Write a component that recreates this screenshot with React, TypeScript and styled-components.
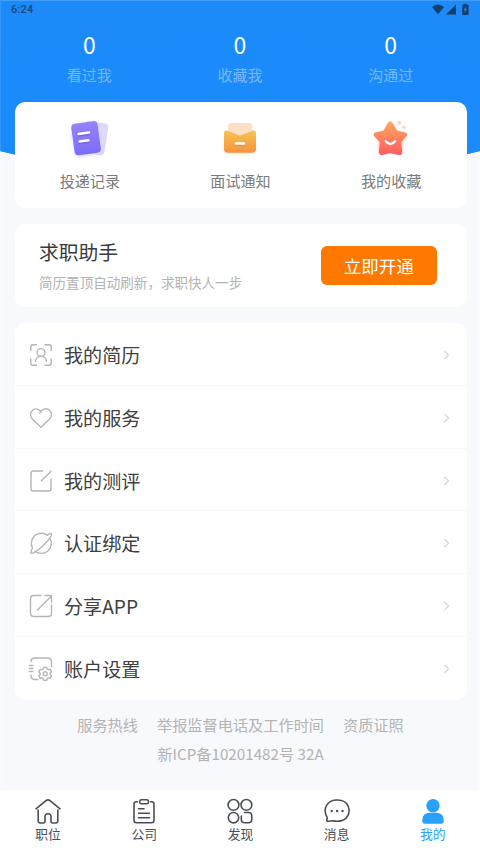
import React from "react";
import styled, { createGlobalStyle } from "styled-components";

const GlobalStyle = createGlobalStyle`
  * { box-sizing: border-box; }
  body { margin: 0; background: #f7f9fc; font-family: "Noto Sans CJK SC", "Noto Sans", sans-serif; }
  button { font-family: inherit; border: 0; padding: 0; background: none; }
`;

const Screen = styled.div`
  position: relative;
  isolation: isolate;
  width: 480px;
  height: 853px;
  display: flex;
  flex-direction: column;
  overflow: hidden;
  background: #f7f9fc;
`;
const Backdrop = styled.svg`
  position: absolute;
  inset: 0;
  z-index: -1;
`;
const StatusBar = styled.header`
  height: 20px;
  flex: none;
  display: flex;
  align-items: center;
  justify-content: space-between;
  padding: 0 11px;
`;
const Clock = styled.span`
  font: 500 11px/20px Roboto, sans-serif;
  letter-spacing: 0.2px;
  color: #16497f;
`;
const Stats = styled.section`
  height: 82px;
  flex: none;
  display: grid;
  grid-template-columns: repeat(3, 1fr);
  margin: 0 14px;
  text-align: center;
`;
const StatValue = styled.div`
  margin-top: 8px;
  font-size: 23px;
  line-height: 32px;
  color: #fff;
`;
const StatLabel = styled.div`
  font-size: 15px;
  line-height: 29px;
  color: #77b8fc;
`;
const Card = styled.section<{ $height: number; $gap?: number }>`
  height: ${(p) => p.$height}px;
  flex: none;
  margin: 0 13.5px ${(p) => p.$gap ?? 16}px 14.5px;
  border-radius: 10px;
  background: #fff;
`;
const Shortcuts = styled(Card)`
  display: grid;
  grid-template-columns: repeat(3, 1fr);
  padding-top: 13px;
`;
const Shortcut = styled.button`
  display: flex;
  flex-direction: column;
  align-items: center;
  font-size: 15.1px;
  line-height: 26px;
  color: #7b7b7b;
  svg { margin-bottom: 7px; overflow: visible; }
`;
const Assistant = styled(Card)`
  display: flex;
  align-items: center;
  justify-content: space-between;
  padding: 0 30px 0 24.5px;
`;
const AssistantTitle = styled.h2`
  margin: 1px 0 -1px;
  font-size: 19.8px;
  font-weight: 400;
  line-height: 32px;
  color: #3a3a3a;
`;
const AssistantNote = styled.p`
  margin: 0;
  font-size: 13.55px;
  line-height: 30px;
  color: #b3b3b3;
`;
const OpenButton = styled.button`
  width: 115.5px;
  height: 38.5px;
  border-radius: 6px;
  background: #ff7800;
  color: #fff;
  font-size: 17.5px;
  line-height: 38px;
`;
const Menu = styled(Card)`
  display: grid;
  grid-template-rows: repeat(6, 1fr);
`;
const MenuRow = styled.button`
  display: grid;
  grid-template-columns: 28px 1fr 10px;
  column-gap: 9px;
  align-items: center;
  padding: 2.4px 15.5px 0 12.5px;
  font-size: 19.1px;
  text-align: left;
  color: #404040;
  border-bottom: 1px solid #f8f8f8;
  &:last-child { border-bottom: 0; padding-top: 1.4px; }
`;
const Footer = styled.footer`
  flex: 1;
  margin-top: -0.6px;
  padding-left: 1px;
  text-align: center;
  font-size: 15.2px;
  line-height: 29px;
  color: #b4b4b4;
`;
const Links = styled.nav`
  display: flex;
  justify-content: center;
  gap: 19px;
`;
const TabBar = styled.nav`
  height: 63.5px;
  flex: none;
  display: grid;
  grid-template-columns: repeat(5, 96.2px);
  background: #fff;
`;
const Tab = styled.button<{ $active?: boolean }>`
  display: flex;
  flex-direction: column;
  align-items: center;
  padding-top: 7px;
  font-size: 12.8px;
  line-height: 18px;
  color: ${(p) => (p.$active ? "#27a1fb" : "#4b4f55")};
`;

const StatusIcons = () => (
  <svg width="38" height="14" viewBox="0 0 38 14" fill="#123f6e">
    <path d="M1 4Q7 -1 13 4L7 11.3Z" />
    <path d="M25 1.500V11.500H15Z" />
    <path fillRule="evenodd" d="M32.5.8h3.2v1h1.200q.7 0 .7.8v8.600q0 .7-.7.7h-5q-.7 0-.7-.7V2.600q0-.8.7-.8h.6ZM35 3.500l-2.300 3.500h1.300l-.3 3 2.300-3.800h-1.300Z" />
  </svg>
);

const RecordsIcon = () => (
  <svg width="44" height="45" viewBox="0 0 44 45">
    <defs>
      <linearGradient id="violet" x1="0" y1="0" x2="0" y2="1"><stop stopColor="#9583fb" /><stop offset="1" stopColor="#7c6df6" /></linearGradient>
      <filter id="glow" x="-30%" y="-30%" width="160%" height="170%"><feGaussianBlur stdDeviation="1.7" /></filter>
    </defs>
    <rect x="4.500" y="8" width="27" height="33" rx="5" fill="#8b7cf9" opacity=".28" filter="url(#glow)" transform="rotate(-8 18 24)" />
    <rect x="15" y="7" width="23.500" height="32" rx="4" fill="#dcd7fd" transform="rotate(9 26 23)" />
    <rect x="4.800" y="7.300" width="26.500" height="31.800" rx="4" fill="url(#violet)" transform="rotate(-8 18 23)" />
    <path d="m10.500 20.600 10.500-1.500m-9.300 9 8.700-1.200" stroke="#5947c6" strokeWidth="2.200" strokeLinecap="round" opacity=".45" />
    <path d="m10.500 19 10.500-1.500m-9.300 9 8.700-1.200" stroke="#fff" strokeWidth="2.400" strokeLinecap="round" />
  </svg>
);
const InterviewIcon = () => (
  <svg width="44" height="45" viewBox="0 0 44 45">
    <defs><linearGradient id="amber" x1="0" y1="0" x2="0" y2="1"><stop stopColor="#f8c453" /><stop offset="1" stopColor="#f6933f" /></linearGradient></defs>
    <rect x="7" y="21" width="30" height="17" rx="4" fill="#f6a04a" opacity=".35" filter="url(#glow)" />
    <rect x="10" y="8" width="24.500" height="23" rx="3" fill="#fddfc5" />
    <path d="M6 18.500q0-4.500 4.300-2.500L22 20.400 33.700 16Q38 14 38 18.500V34q0 3.800-3.800 3.800H9.800Q6 37.800 6 34Z" fill="url(#amber)" />
    <path d="M18 29.800h8" stroke="#df7d27" strokeWidth="2.200" strokeLinecap="round" opacity=".4" />
    <path d="M18 28.500h8" stroke="#fff" strokeWidth="2.400" strokeLinecap="round" />
  </svg>
);
const StarIcon = () => (
  <svg width="44" height="45" viewBox="0 0 44 45">
    <defs><linearGradient id="coral" x1="0" y1="0" x2="0" y2="1"><stop stopColor="#fda95f" /><stop offset="1" stopColor="#fd5c61" /></linearGradient></defs>
    <path d="M9 25h25v14l-12.500-3L9 39Z" fill="#fd7868" opacity=".35" filter="url(#glow)" />
    <path d="M18.800 7.800q2.500-3 4.700 0l4.700 7.800 8.300 2q3 1.200 1 3.700l-5.300 6 1 9.700q-.2 3.700-3.400 3L21 38.200 13 40q-3 .5-3.200-3l1-9.700-5.500-6q-2-2.600 1-3.700l8.200-2Z" fill="url(#coral)" />
    <path d="M16.700 26.200q4.700 5.600 9.300 0" fill="none" stroke="#fff" strokeWidth="2.400" strokeLinecap="round" />
    <ellipse cx="30.200" cy="8" rx="1.900" ry="2.300" fill="#fdd5c9" />
    <ellipse cx="35" cy="12.300" rx="2.200" ry="1.700" fill="#fdd5c9" />
  </svg>
);

const Line = styled.svg`
  fill: none;
  stroke: currentColor;
  stroke-linecap: round;
  stroke-linejoin: round;
`;
const MenuIcon = styled(Line).attrs({ width: 28, height: 28, viewBox: "0 0 28 28" })`
  stroke-width: 1.4px;
  color: #b5b5b5;
`;
const Chevron = () => (
  <Line width="10" height="12" viewBox="0 0 10 12" color="#d2d2d2" strokeWidth="1.100"><path d="m3.500 2.200 4 3.800-4 3.800" /></Line>
);
const TabIcon = styled(Line).attrs({ width: 28, height: 28, viewBox: "0 0 28 28" })`
  stroke-width: 1.6px;
`;

const stats = ["看过我", "收藏我", "沟通过"];
const shortcuts = [
  { label: "投递记录", icon: <RecordsIcon /> },
  { label: "面试通知", icon: <InterviewIcon /> },
  { label: "我的收藏", icon: <StarIcon /> },
];
const menu = [
  {
    label: "我的简历",
    icon: <><path d="M3.800 9.500V6q0-2.200 2.200-2.200h3.500m8.500 0h4q2.200 0 2.200 2.200v3.500m0 8.500v4q0 2.200-2.200 2.200h-4m-8.500 0H6q-2.200 0-2.200-2.200v-4" /><circle cx="14" cy="11.500" r="3.900" /><path d="M8.500 20.500q.3-5.100 5.500-5.100t5.500 5.100" /></>,
  },
  { label: "我的服务", icon: <path d="M14 23.300 5.300 14.900C.8 9.800 6 3.300 11 5.400q1.900.8 3 2.700M12.700 9.100q1.600-2.900 4.300-3.900c5-1.900 10.200 4.600 5.700 9.700L14 23.300" /> },
  { label: "我的测评", icon: <path d="M15.500 4H6.500Q4 4 4 6.500v15Q4 24 6.500 24h15q2.500 0 2.500-2.500V12m0-7.800-9.700 9.500" /> },
  {
    label: "认证绑定",
    icon: <><path d="M5.300 18.500A10 10 0 0 1 20.300 6.200M22.800 9.200A10 10 0 0 1 8 22.200" /><path d="M20.300 6.200q3.400-2.400 4-1.500 1 1.100-3.400 6.800-4.500 5.300-9.500 9.300-6 4.500-7.300 3.300-.9-1 1.200-4.400" /></>,
  },
  { label: "分享APP", icon: <path d="M14 3.500H7Q3.500 3.500 3.500 7v14Q3.500 24.500 7 24.500h14q3.500 0 3.500-3.500V13M10.500 18 24.500 4M18 3.500h6.500V10" /> },
  {
    label: "账户设置",
    icon: (
      <>
        <path d="M4 6.500Q4 3 8 3h12.500q4 0 4 4v4.500M4 20v.500q0 4 4 4h3M2.300 10.500h3.600m-3.600 3h3.600m-3.600 3h3.600" />
        <path strokeWidth="1.600" d="M16.300 13.200h3.400l.6 2 1.300.7 2-.5 1.700 2.900-1.500 1.500v1.500l1.500 1.500-1.700 2.800-2-.5-1.300.7-.6 2h-3.400l-.6-2-1.300-.7-2 .5-1.700-2.800 1.500-1.500v-1.500l-1.500-1.500 1.700-2.900 2 .5 1.300-.7Z" transform="translate(18.200 18.800) scale(.88) translate(-18 -20.500)" />
        <circle cx="18.200" cy="18.800" r="2" />
      </>
    ),
  },
];
const tabs = [
  { label: "职位", icon: <><path d="m2 11.800 10-8.200q2-1.500 4 0l10 8.200" /><path d="M4.200 13v11q0 2 2 2h3q1.800 0 1.800-2v-4.300q0-3 3-3t3 3V24q0 2 1.800 2h3q2 0 2-2V13" /></> },
  { label: "公司", icon: <><path d="M7.500 4.700H6.500Q4 4.700 4 7.200v16q0 2.500 2.500 2.500h15q2.500 0 2.500-2.500v-16q0-2.500-2.500-2.500h-1" /><rect x="9.800" y="2.800" width="8.600" height="4" rx="1.500" /><path d="M8.500 11.800h5.500m-5.500 4.500h11m-11 4.500h11" /></> },
  { label: "发现", icon: <><circle cx="7.500" cy="7.900" r="5.400" /><circle cx="20.400" cy="7.900" r="5.400" /><circle cx="7.500" cy="20.700" r="5.200" /><path d="M18.500 15.500h3.800q3.500 0 3.500 3.500v3.300q0 3.500-3.500 3.500h-3.500q-3.500 0-3.500-3.500V19" /></> },
  { label: "消息", icon: <><path d="M4.200 20.700C-1 11.500 4.500 3 14 3s12.200 6 12.200 10.800S22.500 24.300 14 24.300q-2 0-3.500-.5l-5.500.5q-1.300 0-1.200-1Z" /><path strokeWidth="2.400" d="M8.700 14h.01m5.400 0h.01m5.400 0h.01" /></> },
  { label: "我的", active: true, icon: <g fill="currentColor" stroke="none"><circle cx="14" cy="8.700" r="6.700" /><path d="M3.200 23.700q0-8 8-8h5.600q8 0 8 8 0 3-3 3H6.200q-3 0-3-3Z" /></g> },
];

export default function App() {
  return (
    <>
      <GlobalStyle />
      <Screen>
        <Backdrop width="480" height="853">
          <path d="M0 0H480V151Q240 212 0 151Z" fill="#1d8af9" />
          <path d="M0 57Q240 9 480 57V151Q240 212 0 151Z" fill="#1b8bfc" />
          <path d="M0 .5H480" stroke="#439ef9" />
          <path d="M.5 0V151" stroke="#3596fb" />
          <path d="M1.500 152V790M479.500 152V790" stroke="#fff" opacity=".6" />
        </Backdrop>
        <StatusBar><Clock>6:24</Clock><StatusIcons /></StatusBar>
        <Stats>
          {stats.map((label) => (
            <div key={label}><StatValue>0</StatValue><StatLabel>{label}</StatLabel></div>
          ))}
        </Stats>
        <Shortcuts $height={106}>
          {shortcuts.map((s) => <Shortcut key={s.label}>{s.icon}{s.label}</Shortcut>)}
        </Shortcuts>
        <Assistant $height={83}>
          <div>
            <AssistantTitle>求职助手</AssistantTitle>
            <AssistantNote>简历置顶自动刷新，求职快人一步</AssistantNote>
          </div>
          <OpenButton>立即开通</OpenButton>
        </Assistant>
        <Menu $height={376.5} $gap={11}>
          {menu.map((m) => (
            <MenuRow key={m.label}><MenuIcon>{m.icon}</MenuIcon><span>{m.label}</span><Chevron /></MenuRow>
          ))}
        </Menu>
        <Footer>
          <Links><span>服务热线</span><span>举报监督电话及工作时间</span><span>资质证照</span></Links>
          <div>新ICP备10201482号 32A</div>
        </Footer>
        <TabBar>
          {tabs.map((t) => <Tab key={t.label} $active={t.active}><TabIcon>{t.icon}</TabIcon>{t.label}</Tab>)}
        </TabBar>
      </Screen>
    </>
  );
}
